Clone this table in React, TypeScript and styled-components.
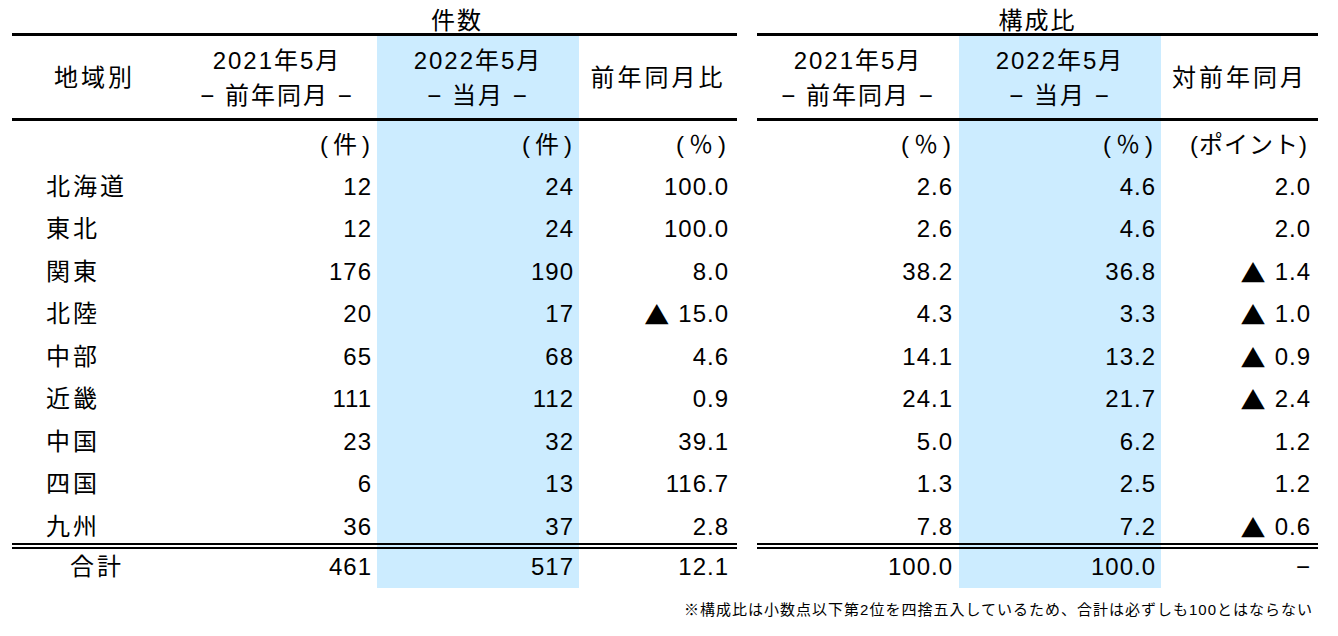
import React from "react";
import styled, { createGlobalStyle } from "styled-components";

const Global = createGlobalStyle`
  html, body { margin: 0; padding: 0; background: #fff; }
  body { font-family: "Liberation Sans", "Noto Sans CJK JP", sans-serif; color: #000; }
`;

const HL = "#ccecff";

const Page = styled.div`
  width: 1338px;
  box-sizing: border-box;
  padding-left: 12px;
  display: flex;
  flex-direction: column;
`;

const Tables = styled.div`
  display: flex;
  gap: 20px;
`;

const Grid = styled.div<{ $cols: string }>`
  display: grid;
  grid-template-columns: ${(p) => p.$cols};
`;

const Blank = styled.div``;

const Title = styled.div<{ $span: string }>`
  grid-column: ${(p) => p.$span};
  height: 33px;
  box-sizing: border-box;
  padding-top: 8px;
  line-height: 26px;
  text-align: center;
  font-size: 24px;
  letter-spacing: 2px;
`;

const HeadCell = styled.div<{ $hl?: boolean; $ls?: number }>`
  height: 81px;
  border-top: 3px solid #000;
  border-bottom: 3px solid #000;
  background: ${(p) => (p.$hl ? HL : "transparent")};
  display: flex;
  flex-direction: column;
  align-items: center;
  justify-content: center;
  font-size: 24px;
  line-height: 35px;
  letter-spacing: ${(p) => p.$ls ?? 2}px;
  padding-top: 1px;
  box-sizing: content-box;
`;

const HeadLine = styled.span`
  display: block;
  white-space: nowrap;
`;

const UnitCell = styled.div<{ $hl?: boolean; $pr: number; $ls: number }>`
  height: 39px;
  display: flex;
  align-items: flex-end;
  justify-content: flex-end;
  padding-right: ${(p) => p.$pr}px;
  background: ${(p) => (p.$hl ? HL : "transparent")};
  font-size: 24px;
  line-height: 30px;
  letter-spacing: ${(p) => p.$ls}px;
  white-space: nowrap;
`;

const Cell = styled.div<{ $hl?: boolean; $pr?: number; $pl?: number; $last?: boolean; $label?: boolean }>`
  height: 41.5px;
  padding-bottom: 1px;
  box-sizing: content-box;
  display: flex;
  align-items: flex-end;
  justify-content: ${(p) => (p.$label ? "flex-start" : "flex-end")};
  padding-left: ${(p) => p.$pl ?? 0}px;
  padding-right: ${(p) => p.$pr ?? 0}px;
  background: ${(p) => (p.$hl ? HL : "transparent")};
  border-bottom: ${(p) => (p.$last ? "6px double #000" : "none")};
  font-size: 24px;
  line-height: 30px;
  letter-spacing: ${(p) => (p.$label ? 3 : 1)}px;
  white-space: nowrap;
`;

const TotalCell = styled.div<{ $hl?: boolean; $pr?: number; $pl?: number; $label?: boolean }>`
  height: 39px;
  display: flex;
  align-items: center;
  justify-content: ${(p) => (p.$label ? "flex-start" : "flex-end")};
  padding-left: ${(p) => p.$pl ?? 0}px;
  padding-right: ${(p) => p.$pr ?? 0}px;
  padding-bottom: 2px;
  box-sizing: border-box;
  background: ${(p) => (p.$hl ? HL : "transparent")};
  font-size: 24px;
  line-height: 30px;
  letter-spacing: ${(p) => (p.$label ? 3 : 1)}px;
  white-space: nowrap;
`;

const Tri = styled.span`
  font-family: "Noto Sans CJK JP", sans-serif;
  font-size: 25px;
  letter-spacing: 0;
  margin-right: 9px;
`;

const Footnote = styled.div`
  width: 1306px;
  box-sizing: border-box;
  padding-right: 5px;
  margin-top: 10px;
  text-align: right;
  font-size: 15px;
  line-height: 24px;
  letter-spacing: 1px;
  white-space: nowrap;
`;

type Row = { name: string; a: string; b: string; c: string; d: string; e: string; f: string };

const rows: Row[] = [
  { name: "北海道", a: "12", b: "24", c: "100.0", d: "2.6", e: "4.6", f: "2.0" },
  { name: "東北", a: "12", b: "24", c: "100.0", d: "2.6", e: "4.6", f: "2.0" },
  { name: "関東", a: "176", b: "190", c: "8.0", d: "38.2", e: "36.8", f: "-1.4" },
  { name: "北陸", a: "20", b: "17", c: "-15.0", d: "4.3", e: "3.3", f: "-1.0" },
  { name: "中部", a: "65", b: "68", c: "4.6", d: "14.1", e: "13.2", f: "-0.9" },
  { name: "近畿", a: "111", b: "112", c: "0.9", d: "24.1", e: "21.7", f: "-2.4" },
  { name: "中国", a: "23", b: "32", c: "39.1", d: "5.0", e: "6.2", f: "1.2" },
  { name: "四国", a: "6", b: "13", c: "116.7", d: "1.3", e: "2.5", f: "1.2" },
  { name: "九州", a: "36", b: "37", c: "2.8", d: "7.8", e: "7.2", f: "-0.6" },
];

const Val = ({ v }: { v: string }) =>
  v.startsWith("-") ? (
    <>
      <Tri>▲</Tri>
      {v.slice(1)}
    </>
  ) : (
    <>{v}</>
  );

export default function App() {
  return (
    <>
      <Global />
      <Page>
        <Tables>
          <Grid $cols="165px 200px 202px 158px">
            <Blank />
            <Title $span="2 / 5">件数</Title>

            <HeadCell $ls={3}>
              <HeadLine>地域別</HeadLine>
            </HeadCell>
            <HeadCell>
              <HeadLine>2021年5月</HeadLine>
              <HeadLine>− 前年同月 −</HeadLine>
            </HeadCell>
            <HeadCell $hl>
              <HeadLine>2022年5月</HeadLine>
              <HeadLine>− 当月 −</HeadLine>
            </HeadCell>
            <HeadCell $ls={3}>
              <HeadLine>前年同月比</HeadLine>
            </HeadCell>

            <UnitCell $pr={0} $ls={0} />
            <UnitCell $pr={2} $ls={5}>(件)</UnitCell>
            <UnitCell $hl $pr={2} $ls={5}>(件)</UnitCell>
            <UnitCell $pr={6} $ls={5}>(％)</UnitCell>

            {rows.map((r, i) => {
              const last = i === rows.length - 1;
              return (
                <React.Fragment key={r.name}>
                  <Cell $label $pl={34} $last={last}>{r.name}</Cell>
                  <Cell $pr={5} $last={last}>{r.a}</Cell>
                  <Cell $hl $pr={5} $last={last}>{r.b}</Cell>
                  <Cell $pr={8} $last={last}><Val v={r.c} /></Cell>
                </React.Fragment>
              );
            })}

            <TotalCell $label $pl={58}>合計</TotalCell>
            <TotalCell $pr={5}>461</TotalCell>
            <TotalCell $hl $pr={5}>517</TotalCell>
            <TotalCell $pr={8}>12.1</TotalCell>
          </Grid>

          <Grid $cols="202px 202px 157px">
            <Title $span="1 / 4">構成比</Title>

            <HeadCell>
              <HeadLine>2021年5月</HeadLine>
              <HeadLine>− 前年同月 −</HeadLine>
            </HeadCell>
            <HeadCell $hl>
              <HeadLine>2022年5月</HeadLine>
              <HeadLine>− 当月 −</HeadLine>
            </HeadCell>
            <HeadCell $ls={3}>
              <HeadLine>対前年同月</HeadLine>
            </HeadCell>

            <UnitCell $pr={3} $ls={5}>(％)</UnitCell>
            <UnitCell $hl $pr={3} $ls={5}>(％)</UnitCell>
            <UnitCell $pr={10} $ls={1}>(ポイント)</UnitCell>

            {rows.map((r, i) => {
              const last = i === rows.length - 1;
              return (
                <React.Fragment key={r.name}>
                  <Cell $pr={6} $last={last}>{r.d}</Cell>
                  <Cell $hl $pr={5} $last={last}>{r.e}</Cell>
                  <Cell $pr={7} $last={last}><Val v={r.f} /></Cell>
                </React.Fragment>
              );
            })}

            <TotalCell $pr={6}>100.0</TotalCell>
            <TotalCell $hl $pr={5}>100.0</TotalCell>
            <TotalCell $pr={7}>−</TotalCell>
          </Grid>
        </Tables>
        <Footnote>※構成比は小数点以下第2位を四捨五入しているため、合計は必ずしも100とはならない</Footnote>
      </Page>
    </>
  );
}
